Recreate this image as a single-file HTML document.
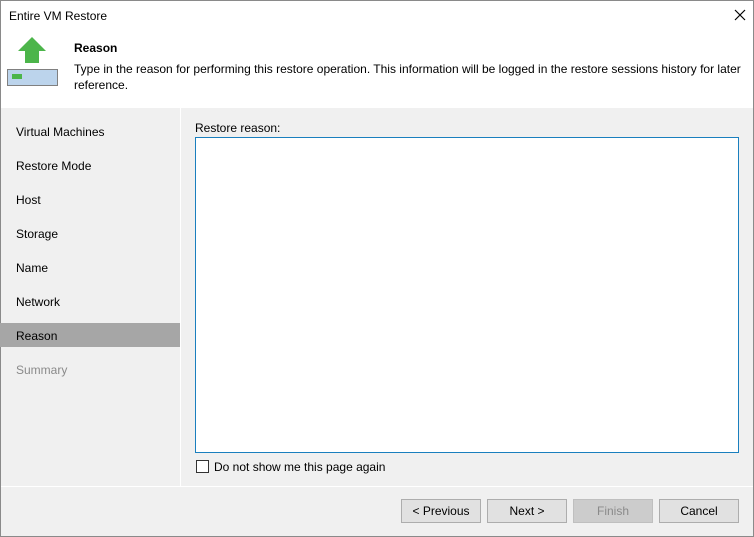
<!DOCTYPE html>
<html><head><style>
*{margin:0;padding:0;box-sizing:border-box}
body{width:754px;height:537px;overflow:hidden;font-family:"Liberation Sans",sans-serif;font-size:12px;color:#000;background:#f0f0f0;position:relative}
.win{position:absolute;left:0;top:0;width:754px;height:537px;border:1px solid #8a8a8a;background:#f0f0f0}
.top{position:absolute;left:0;top:0;width:752px;height:107px;background:#fff}
.abs{position:absolute;white-space:nowrap}
.nav{position:absolute;left:-1px;width:180px;height:24px;line-height:26px;padding-left:16px}
.btn{position:absolute;top:498px;width:80px;height:24px;border:1px solid #adadad;background:#e1e1e1;text-align:center;line-height:23px}
</style></head><body>
<div class="win">
<div class="top"></div>
<div class="abs" style="left:8px;top:8px">Entire VM Restore</div>
<svg class="abs" style="left:733px;top:8px" width="12" height="12"><path d="M1 1L11 11M11 1L1 11" stroke="#000" stroke-width="1.2"/></svg>
<svg class="abs" style="left:5px;top:35px" width="54" height="52">
<polygon points="26,1 40,15 33,15 33,27 19,27 19,15 12,15" fill="#4cb54a"/>
<rect x="1.5" y="33.5" width="50" height="16" fill="#bcd4ec" stroke="#808080"/>
<rect x="6" y="38" width="10" height="5" fill="#4cb54a"/>
</svg>
<div class="abs" style="left:73px;top:40px;font-weight:bold">Reason</div>
<div class="abs" style="left:73px;top:60px;line-height:16px">Type in the reason for performing this restore operation. This information will be logged in the restore sessions history for later<br>reference.</div>
<div class="abs" style="left:179px;top:107px;width:1px;height:378px;background:#fff"></div>
<div class="nav" style="top:118px">Virtual Machines</div>
<div class="nav" style="top:152px">Restore Mode</div>
<div class="nav" style="top:186px">Host</div>
<div class="nav" style="top:220px">Storage</div>
<div class="nav" style="top:254px">Name</div>
<div class="nav" style="top:288px">Network</div>
<div class="nav" style="top:322px;background:#a6a6a6">Reason</div>
<div class="nav" style="top:356px;color:#8a8a8a">Summary</div>
<div class="abs" style="left:194px;top:120px">Restore reason:</div>
<div class="abs" style="left:194px;top:136px;width:544px;height:316px;background:#fff;border:1px solid #1a7fbe"></div>
<div class="abs" style="left:195px;top:459px;width:13px;height:13px;border:1px solid #333;background:#fff"></div>
<div class="abs" style="left:213px;top:459px">Do not show me this page again</div>
<div class="abs" style="left:0;top:485px;width:752px;height:1px;background:#fff"></div>
<div class="btn" style="left:400px">&lt; Previous</div>
<div class="btn" style="left:486px">Next &gt;</div>
<div class="btn" style="left:572px;color:#8a8a8a;background:#cccccc;border-color:#bfbfbf">Finish</div>
<div class="btn" style="left:658px">Cancel</div>
</div>
</body></html>
